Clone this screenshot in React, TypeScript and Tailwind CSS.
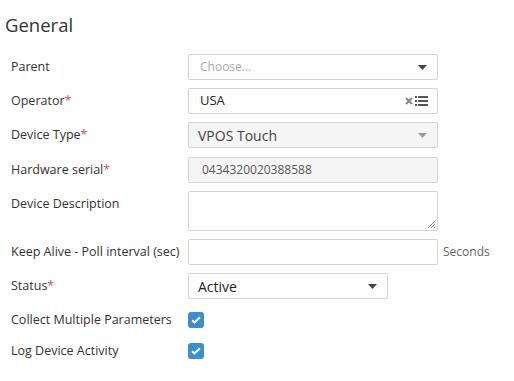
import React from "react";

const Star = () => <span className="text-[#e0504d]">*</span>;

const Caret = ({ color = "#555" }: { color?: string }) => (
  <svg width="9" height="5" viewBox="0 0 9 5"><path d="M0 0h9L4.5 5z" fill={color} /></svg>
);

const Check = () => (
  <div className="w-4 h-4 rounded-[3px] bg-[#3b8fcb] flex items-center justify-center">
    <svg width="10" height="8" viewBox="0 0 10 8"><path d="M1 4.2l2.5 2.3L9 1.2" stroke="#fff" strokeWidth="2" fill="none" /></svg>
  </div>
);

export default function App() {
  const label = "w-[188px] pl-[11px] text-[12.5px] text-[#333] shrink-0";
  return (
    <div className="w-[514px] h-[381px] bg-white text-[#333]" style={{ fontFamily: '"Open Sans", sans-serif' }}>
      <div className="pl-[5px] pt-[12px] text-[18.5px] leading-[26px] text-[#333]">General</div>
      <div className="flex flex-col mt-[16px]">
        <div className="flex items-center h-[26px]">
          <div className={label}>Parent</div>
          <div className="w-[250px] h-[26px] border border-[#d4d4d4] rounded-[2px] flex items-center justify-between pl-[11px] pr-[10px] text-[12px] text-[#aaa]">
            <span>Choose...</span><Caret color="#444" />
          </div>
        </div>
        <div className="flex items-center h-[26px] mt-[8px]">
          <div className={label}>Operator<Star /></div>
          <div className="w-[250px] h-[26px] border border-[#d4d4d4] rounded-[2px] flex items-center justify-between pl-[11px] pr-[9px] text-[13px] text-[#222]">
            <span>USA</span>
            <span className="flex items-center gap-[2px]">
              <svg width="8" height="8" viewBox="0 0 8 8"><path d="M1 1l6 6M7 1L1 7" stroke="#888" strokeWidth="2" /></svg>
              <svg width="13" height="10" viewBox="0 0 13 10"><path d="M0 0h2v2H0zM3 0h10v2H3zM0 4h2v2H0zM3 4h10v2H3zM0 8h2v2H0zM3 8h10v2H3z" fill="#555" /></svg>
            </span>
          </div>
        </div>
        <div className="flex items-center h-[26px] mt-[8px]">
          <div className={label}>Device Type<Star /></div>
          <div className="w-[250px] h-[26px] border border-[#d4d4d4] rounded-[2px] bg-[#f5f5f5] flex items-center justify-between pl-[9px] pr-[10px] text-[14px] text-[#444]">
            <span>VPOS Touch</span><Caret color="#999" />
          </div>
        </div>
        <div className="flex items-center h-[26px] mt-[9px]">
          <div className={label}>Hardware serial<Star /></div>
          <div className="w-[250px] h-[26px] border border-[#d4d4d4] rounded-[2px] bg-[#f5f5f5] flex items-center pl-[13px] text-[12px] text-[#555]">
            0434320020388588
          </div>
        </div>
        <div className="flex items-start h-[40px] mt-[8px]">
          <div className={label + " pt-[4px]"}>Device Description</div>
          <div className="relative w-[250px] h-[40px] border border-[#d4d4d4] rounded-[2px]">
            <svg className="absolute right-[2px] bottom-[2px]" width="8" height="8" viewBox="0 0 8 8"><path d="M8 1L1 8M8 4L4 8M8 7L7 8" stroke="#777" strokeWidth="0.8" /></svg>
          </div>
        </div>
        <div className="flex items-center h-[26px] mt-[8px]">
          <div className={label}>Keep Alive - Poll interval (sec)</div>
          <div className="w-[250px] h-[26px] border border-[#d4d4d4] rounded-[2px]" />
          <span className="ml-[5px] text-[12px] text-[#666]">Seconds</span>
        </div>
        <div className="flex items-center h-[26px] mt-[8px]">
          <div className={label}>Status<Star /></div>
          <div className="w-[200px] h-[26px] border border-[#d4d4d4] rounded-[2px] flex items-center justify-between pl-[9px] pr-[10px] text-[14px] text-[#222]">
            <span>Active</span><Caret color="#444" />
          </div>
        </div>
        <div className="flex items-center h-[16px] mt-[13px]">
          <div className={label}>Collect Multiple Parameters</div>
          <Check />
        </div>
        <div className="flex items-center h-[16px] mt-[15px]">
          <div className={label}>Log Device Activity</div>
          <Check />
        </div>
      </div>
    </div>
  );
}
